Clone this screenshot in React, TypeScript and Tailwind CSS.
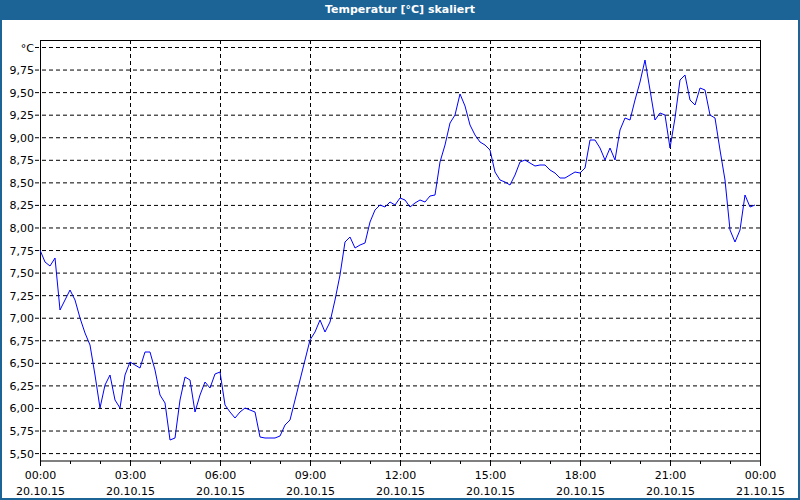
const pts = [40,250,45,262,50,266,55,258,60,310,65,300,70,290,75,300,80,318,85,333,90,345,95,375,100,408,105,385,110,375,115,400,120,408,125,375,130,362,135,365,140,368,145,352,150,352,155,370,160,395,165,403,170,440,175,438,180,400,185,377,190,380,195,412,200,395,205,382,210,388,215,374,220,372,225,405,230,412,235,418,240,412,245,408,250,410,255,412,260,437,265,438,275,438,280,436,285,425,290,420,295,400,300,380,305,360,310,340,315,332,320,320,325,332,330,322,335,300,340,275,345,242,350,237,355,248,360,245,365,243,370,222,375,210,380,205,385,207,390,202,395,205,400,198,405,200,410,207,415,203,420,200,425,202,430,196,435,195,440,162,445,145,450,123,455,115,460,94,465,106,470,125,475,135,480,142,485,145,490,150,495,172,500,180,505,182,510,185,515,175,520,162,525,160,530,163,535,166,540,165,545,165,550,170,555,173,560,178,565,178,570,175,575,172,580,173,585,168,590,140,595,140,600,148,605,160,610,148,615,160,620,130,625,118,630,120,635,100,640,82,645,60,650,90,655,120,660,113,665,115,670,148,675,118,680,80,685,75,690,100,695,105,700,88,705,90,710,115,715,118,720,150,725,180,730,230,735,242,740,230,745,195,750,207,755,205];

const poly = pts.reduce((a, v, i) => a + (i % 2 ? "," + v + " " : String(v)), "");
const yl = ["°C","9,75","9,50","9,25","9,00","8,75","8,50","8,25","8,00","7,75","7,50","7,25","7,00","6,75","6,50","6,25","6,00","5,75","5,50"];
const xl = ["00:00","03:00","06:00","09:00","12:00","15:00","18:00","21:00","00:00"];

export default function App() {
  return (
    <div className="w-[800px] h-[500px] flex flex-col bg-white" style={{ fontFamily: '"DejaVu Sans", sans-serif' }}>
      <div className="h-[20px] bg-[#1c6396] text-white text-[11px] font-bold flex items-center justify-center">Temperatur [°C] skaliert</div>
      <div className="flex-1 border-x-2 border-b-2 border-[#1c6396] relative">
        <svg width="800" height="500" className="absolute left-[-2px] top-[-20px]" viewBox="0 0 800 500">
          {yl.map((t, i) => {
            const y = 47.5 + i * 22.56;
            return (
              <g key={i}>
                <line x1="35" x2="760" y1={y} y2={y} stroke="#000" strokeDasharray="4 3" />
                <text x="34" y={y + 4} textAnchor="end" fontSize="11" fill="#000">{t}</text>
              </g>
            );
          })}
          {xl.map((t, i) => {
            const x = 40.5 + i * 90;
            return (
              <g key={i}>
                {i > 0 && i < 8 && <line x1={x} x2={x} y1="40" y2="461" stroke="#000" strokeDasharray="4 3" />}
                <line x1={x} x2={x} y1="461" y2="466" stroke="#000" />
                <text x={x} y="479" textAnchor="middle" fontSize="11">{t}</text>
                <text x={x} y="495" textAnchor="middle" fontSize="11">{i === 8 ? "21.10.15" : "20.10.15"}</text>
              </g>
            );
          })}
          {Array.from({ length: 24 }).map((_, i) => (
            <line key={i} x1={40.5 + i * 30} x2={40.5 + i * 30} y1="461" y2="464" stroke="#000" />
          ))}
          <rect x="40.5" y="40.5" width="720" height="420.5" fill="none" stroke="#000" />
          <polyline points={poly} fill="none" stroke="#0000ff" strokeWidth="1" />
        </svg>
      </div>
    </div>
  );
}
